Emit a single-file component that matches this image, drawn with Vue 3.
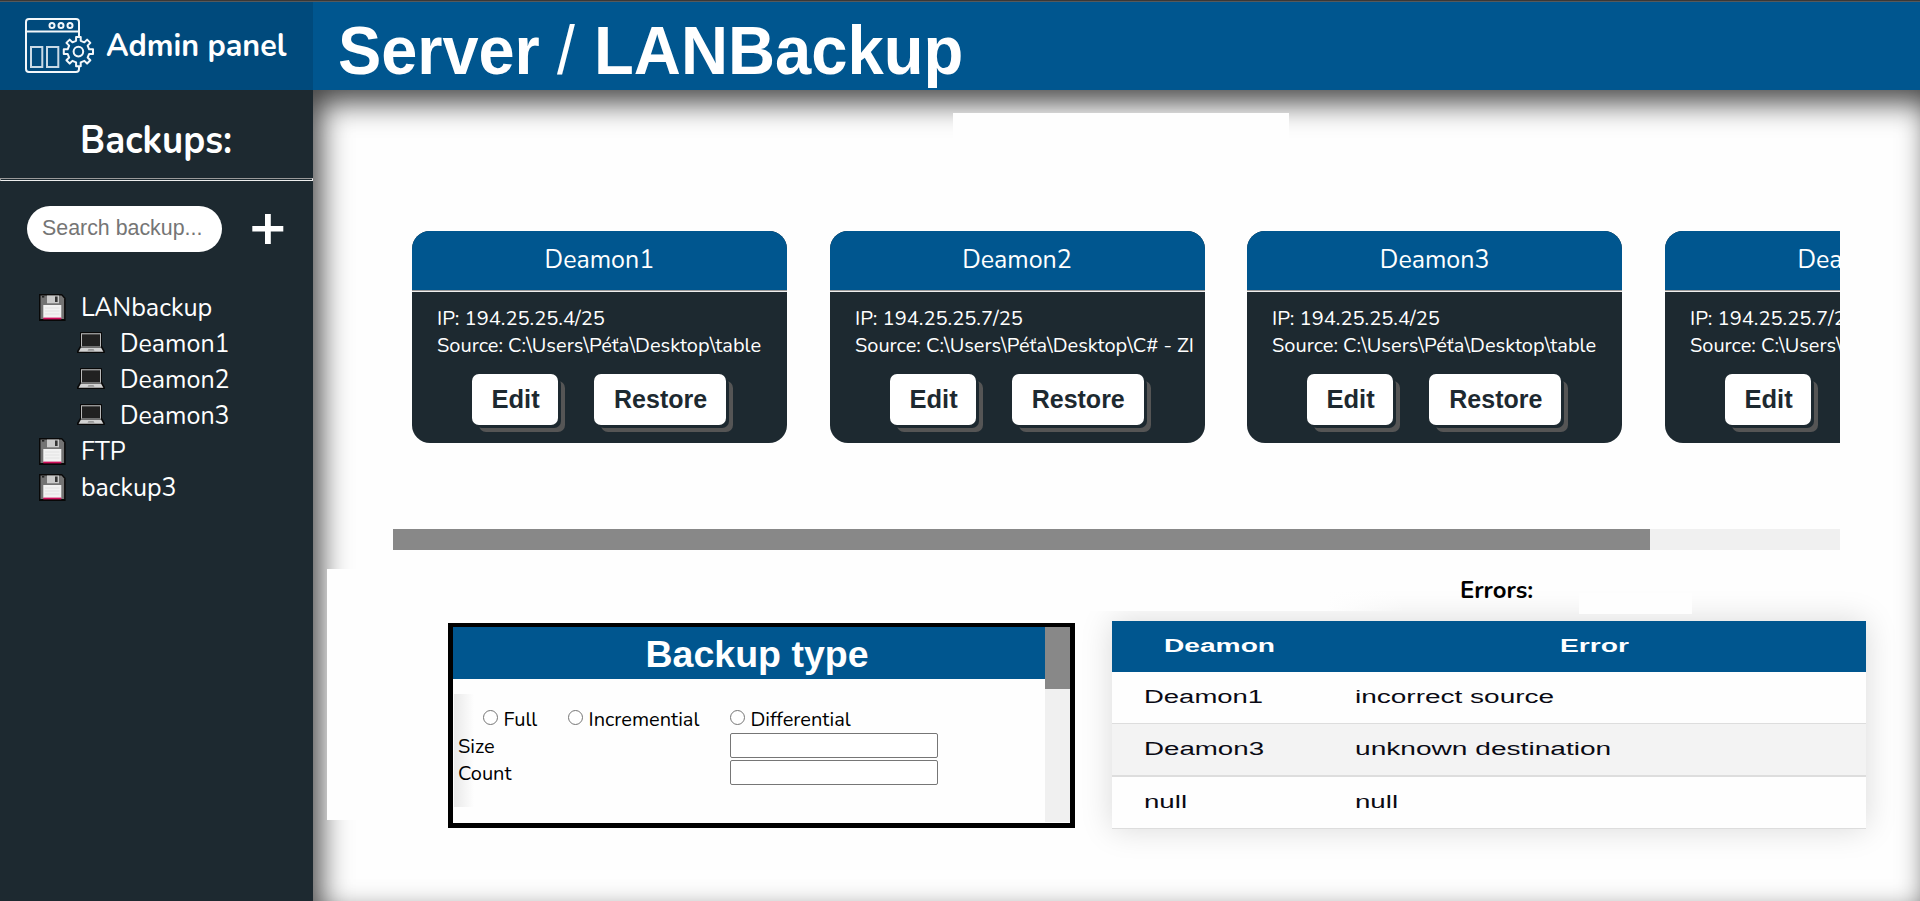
<script setup>
// Stretches or condenses a label horizontally to its intended width.
const vFit = {
  mounted(el, { value }) {
    el.style.transform = `scaleX(${value / el.offsetWidth})`
  },
}

const tree = [
  { name: 'LANbackup', w: 131, icon: 'disk' },
  { name: 'Deamon1', w: 110, icon: 'pc' },
  { name: 'Deamon2', w: 110, icon: 'pc' },
  { name: 'Deamon3', w: 110, icon: 'pc' },
  { name: 'FTP', w: 45, icon: 'disk' },
  { name: 'backup3', w: 96, icon: 'disk' },
]

const table = { src: 'Source: C:\\Users\\Péťa\\Desktop\\table', w: 324 }
const zi = { src: 'Source: C:\\Users\\Péťa\\Desktop\\C# - ZI', w: 339 }
const cards = [
  { name: 'Deamon1', ip: 'IP: 194.25.25.4/25', ...table },
  { name: 'Deamon2', ip: 'IP: 194.25.25.7/25', ...zi },
  { name: 'Deamon3', ip: 'IP: 194.25.25.4/25', ...table },
  { name: 'Deamon4', ip: 'IP: 194.25.25.7/25', ...zi },
]

const errors = [
  { d: 'Deamon1', dw: 119, e: 'incorrect source', ew: 199 },
  { d: 'Deamon3', dw: 120, e: 'unknown destination', ew: 256 },
  { d: 'null', dw: 43, e: 'null', ew: 43 },
]

function gear(cx, cy, teeth, outer, inner) {
  const pts = []
  const step = (Math.PI * 2) / teeth
  for (let i = 0; i < teeth; i++) {
    const a = i * step - Math.PI / 2
    for (const [o, r] of [[-0.27, inner], [-0.2, outer], [0.2, outer], [0.27, inner]]) {
      pts.push(`${(cx + r * Math.cos(a + o * step)).toFixed(2)} ${(cy + r * Math.sin(a + o * step)).toFixed(2)}`)
    }
  }
  return `M${pts.join('L')}Z`
}
const gearPath = gear(53.4, 33.6, 8, 14.8, 11)
</script>

<template>
  <div class="page">
    <aside class="side">
      <div class="brand">
        <svg class="logo" width="70" height="56" viewBox="0 0 70 56" fill="none" stroke="#f3f7fa" stroke-width="2">
          <path d="M54 19V4a3 3 0 0 0-3-3H4a3 3 0 0 0-3 3v47a3 3 0 0 0 3 3h47a3 3 0 0 0 3-3v-2M1 13.5h53" />
          <circle cx="27" cy="7.4" r="2.5" /><circle cx="36" cy="7.4" r="2.5" /><circle cx="45" cy="7.4" r="2.5" />
          <path d="M6 29h11.3v20H6zM22 29h11.3v20H22z" stroke="#c9dae6" />
          <path :d="gearPath" stroke-linejoin="round" />
          <circle cx="53.4" cy="33.6" r="4.8" />
        </svg>
        <span v-fit="180" class="fit">Admin panel</span>
      </div>
      <h2><span v-fit="152" class="fit mid">Backups:</span></h2>
      <div class="rule"></div>
      <div class="search">
        <div class="field"><span v-fit="160" class="fit">Search backup...</span></div>
        <svg width="32" height="32" viewBox="0 0 32 32"><path d="M.3 12h31v5.6H.3zM13 0h5.8v30H13z" fill="#fff" /></svg>
      </div>
      <ul class="tree">
        <li v-for="t in tree" :key="t.name" :class="t.icon">
          <svg v-if="t.icon === 'disk'" width="27" height="27" viewBox="0 0 27 27">
            <path d="M0 0h23l3.6 4v23H0z" fill="#080808" />
            <path d="M1.5 1.5h21l2.6 3v20.5H1.5z" fill="#737373" />
            <path d="M8 1.5h12v7.8H8z" fill="#c9c9c9" /><path d="M16 2.5h2.6v5.5H16z" fill="#333" />
            <path d="M3 2h2.3v1.6H3z" fill="#222" />
            <path d="M4.3 11h18v13h-18z" fill="#f2f2f2" />
            <path d="M6 14h14.5M6 17h14.5M6 20h14.5" stroke="#dcdcdc" stroke-width=".7" />
            <path d="M4.3 23.6h18v1.8h-18z" fill="#d0105c" />
          </svg>
          <svg v-else width="28" height="22" viewBox="0 0 28 22">
            <path d="M3 .8Q3 0 4 0h20q1 0 1 .8V14l2.8 5v2H0v-2l3-5z" fill="#080808" />
            <path d="M4 1.2h20v13.6H4z" fill="#b9b9b9" /><path d="M5 2.3h18v12H5z" fill="#212121" />
            <path d="M4 15.5h20l2.4 4.2H1.6z" fill="#d2d2d2" /><path d="M11.5 17h5l1 1.7h-7z" fill="#999" />
          </svg>
          <span v-fit="t.w" class="fit">{{ t.name }}</span>
        </li>
      </ul>
    </aside>

    <div class="right">
      <header>
        <div class="t1"><span v-fit="202" class="fit">Server</span></div>
        <div class="t2"><span v-fit="18" class="fit">/</span></div>
        <div><span v-fit="369" class="fit">LANBackup</span></div>
      </header>
      <main>
        <div class="patch top"></div>
        <div class="patch left"></div>
        <section class="scroller">
          <div class="cards">
            <article v-for="c in cards" :key="c.name">
              <h3><span v-fit="110" class="fit mid">{{ c.name }}</span></h3>
              <div class="info">
                <div><span v-fit="168" class="fit">{{ c.ip }}</span></div>
                <div><span v-fit="c.w" class="fit">{{ c.src }}</span></div>
              </div>
              <div class="btns">
                <button class="edit"><span v-fit="48" class="fit mid">Edit</span></button>
                <button class="restore"><span v-fit="93" class="fit mid">Restore</span></button>
              </div>
            </article>
          </div>
          <div class="hbar"><div></div></div>
        </section>

        <div class="lower">
          <section class="panel">
            <div class="body">
              <h3><span v-fit="223" class="fit mid">Backup type</span></h3>
              <div class="form">
                <div class="radios">
                  <label class="r1"><i></i><span v-fit="34" class="fit">Full</span></label>
                  <label class="r2"><i></i><span v-fit="111" class="fit">Incremential</span></label>
                  <label><i></i><span v-fit="100" class="fit">Differential</span></label>
                </div>
                <div class="row"><div class="lab"><span v-fit="37" class="fit">Size</span></div><div class="inp"></div></div>
                <div class="row"><div class="lab"><span v-fit="53" class="fit">Count</span></div><div class="inp"></div></div>
              </div>
            </div>
            <div class="vbar"><div></div></div>
          </section>

          <section class="errors">
            <h4><span v-fit="73" class="fit">Errors:</span></h4>
            <div class="patch mask"></div>
            <div class="patch note"></div>
            <div class="table">
              <div class="tr th">
                <div class="td"><span v-fit="111" class="fit">Deamon</span></div>
                <div class="td"><span v-fit="69" class="fit">Error</span></div>
              </div>
              <div v-for="(r, i) in errors" :key="i" class="tr">
                <div class="td"><span v-fit="r.dw" class="fit">{{ r.d }}</span></div>
                <div class="td"><span v-fit="r.ew" class="fit">{{ r.e }}</span></div>
              </div>
            </div>
          </section>
        </div>
      </main>
    </div>
  </div>
</template>

<style>
body { background: #fff; overflow: hidden; }
</style>

<style scoped>
* { box-sizing: border-box; margin: 0; }
.page { display: flex; width: 1920px; height: 901px; border-top: 1px solid #3b3836; font-family: Nunito, Lato, sans-serif; overflow: hidden; }
.fit { display: inline-block; white-space: nowrap; transform-origin: 0 50%; }
.fit.mid { transform-origin: 50% 50%; }
.side { width: 313px; flex: none; background: #1d2930; color: #fff; }
.brand { height: 89px; border-top: 1px solid #55595c; background: #004a7c; display: flex; padding-left: 25px; font-size: 32px; font-weight: 700; line-height: 88px; }
.logo { margin: 16px 11px 0 0; flex: none; }
.side h2 { height: 88px; line-height: 102px; text-align: center; font-size: 39px; font-weight: 700; }
.rule { height: 3px; border: 1px solid; border-color: #9a9a9a #eee #eee #9a9a9a; }
.search { display: flex; padding: 25px 0 0 27px; height: 108px; }
.search svg { margin: 8px 0 0 30px; }
.field { width: 195px; height: 46px; border-radius: 23px; background: #fff; color: #757575; padding-left: 14.5px; font: 21.5px/45px "Liberation Sans", Arial, sans-serif; }
.tree { list-style: none; padding: 0; font-size: 25px; line-height: 36px; }
.tree li { height: 36px; display: flex; align-items: center; }
.tree .fit { padding-top: 2px; }
.tree .disk { padding-left: 39px; gap: 15px; }
.tree .pc { padding-left: 77px; gap: 15px; }
.right { flex: 1; min-width: 0; display: flex; flex-direction: column; }
header { height: 89px; flex: none; border-top: 1px solid #55595c; background: #00568f; color: #fff; display: flex; padding-left: 25px; font: bold 68px/97px "Liberation Sans", Arial, sans-serif; }
.t1 { width: 219px; }
.t2 { width: 37px; font-weight: 400; }
main { flex: 1; position: relative; background: #fefefe; box-shadow: inset 8px 13px 30px -1px rgba(0, 0, 0, .75); padding: 141px 0 0 80px; }
.patch { position: absolute; background: #fefefe; }
.patch.top { left: 640px; top: 23px; width: 336px; height: 40px; }
.patch.left { left: 14px; top: 479px; width: 50px; height: 251px; }
.scroller { width: 1447px; height: 319px; overflow: hidden; display: flex; flex-direction: column; justify-content: space-between; position: relative; }
.cards { display: flex; gap: 42.65px; padding-left: 18.9px; }
article { width: 375px; height: 212px; flex: none; border-radius: 18px; overflow: hidden; background: #1d2930; color: #fff; }
article h3 { height: 61px; background: #00568f; border-bottom: 1px solid #eee; box-shadow: inset 0 -1px #9a9a9a; text-align: center; font-size: 25px; font-weight: 400; line-height: 59px; }
.info { padding: 13px 0 0 25px; font-size: 20.5px; line-height: 27px; height: 82px; }
.btns { display: flex; gap: 36px; padding-left: 60.2px; }
button { height: 51px; padding: 0; border: 0; border-radius: 7px; background: #fff; color: #1d2930; box-shadow: 3px 3px #1d2930, 7px 7px #555; font: bold 25px/51px "Liberation Sans", Arial, sans-serif; }
.edit { width: 86px; padding-left: 1px; }
.restore { width: 132px; padding-left: 1px; }
.hbar { height: 21px; background: #f0f0f0; }
.hbar div { width: 1257px; height: 21px; background: #888; }
.lower { display: flex; gap: 37px; padding: 19px 0 0 55px; }
.panel { width: 627px; height: 205px; margin-top: 54px; border: 5px solid #000; border-top-width: 4px; background: #fefefe; display: flex; position: relative; }
.body { flex: 1; }
.body h3 { height: 52px; padding-left: 17px; background: #00568f; color: #fff; text-align: center; font: bold 37px/55px "Liberation Sans", Arial, sans-serif; }
.form { margin: 15px 0 0 1px; height: 113px; padding: 11px 0 0 4px; font-size: 20px; line-height: 30px; background: linear-gradient(90deg, #e9e9e9, #fefefe 20px); }
.radios { display: flex; height: 27px; padding-left: 25px; }
.radios label { display: flex; }
.r1 { width: 85px; }
.r2 { width: 162px; }
i { width: 15px; height: 15px; border: 1px solid #767676; border-radius: 50%; background: #fff; margin: 5px 5.5px 0 0; }
.row { display: flex; height: 27px; }
.lab { width: 272px; }
.inp { width: 208px; height: 25px; margin-top: 1px; border: 1px solid #767676; border-radius: 2px; background: #fff; }
.vbar { width: 25px; height: 195px; background: #f0f0f0; }
.vbar div { height: 62px; background: #888; }
.errors { width: 754px; position: relative; }
.errors h4 { height: 52px; padding-left: 348px; color: #000; font-size: 24.5px; font-weight: 700; line-height: 43px; position: relative; z-index: 2; }
.mask { left: -25px; top: 20px; width: 320px; height: 22px; z-index: 1; background: linear-gradient(90deg, #fefefe 75%, transparent); }
.note { left: 467px; top: 24px; width: 113px; height: 21px; z-index: 1; }
.table { position: relative; box-shadow: 0 0 30px rgba(0, 0, 0, .15); background: #fefefe; font: 18px/51px "Liberation Sans", Arial, sans-serif; color: #0a0a14; }
.tr { display: grid; grid-template-columns: 211px 1fr; height: 52px; padding-left: 31.5px; border-bottom: 1px solid #ddd; }
.tr:nth-child(3) { height: 53px; border-bottom-width: 2px; background: #f3f3f3; }
.th { height: 51px; border: 0; background: #00568f; color: #fff; font-weight: 700; grid-template-columns: 396px 1fr; padding-left: 52px; }
</style>
